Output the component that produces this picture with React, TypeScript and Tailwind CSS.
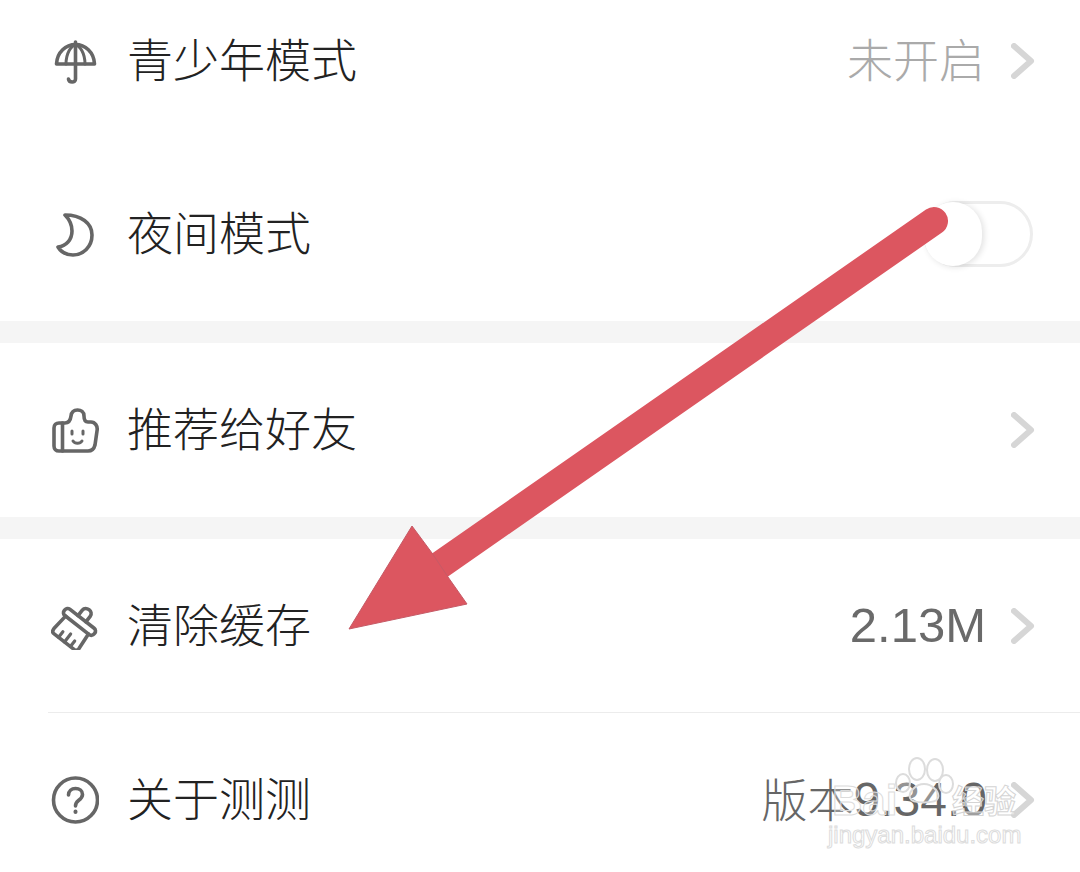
import type { ReactNode } from "react";

const cjk = "font-['Noto_Sans_CJK_SC','Noto_Sans',sans-serif]";
const latin = "font-['Liberation_Sans',sans-serif]";

function Chevron() {
  return (
    <svg width="24" height="36" viewBox="0 0 24 36" className="ml-[26px] shrink-0">
      <path d="M3 3 L20 18 L3 33" fill="none" stroke="#d6d6d6" strokeWidth="6" strokeLinecap="round" strokeLinejoin="round" />
    </svg>
  );
}

function Icon({ children }: { children: ReactNode }) {
  return (
    <svg
      width="48"
      height="48"
      viewBox="0 0 48 48"
      fill="none"
      stroke="#666"
      strokeWidth="3.6"
      strokeLinecap="round"
      strokeLinejoin="round"
      className="shrink-0"
    >
      {children}
    </svg>
  );
}

const UmbrellaIcon = () => (
  <Icon>
    <path d="M5.5 27 C6 15 15 7.5 24.5 7.5 C34 7.5 43 15 43.5 27 Z" />
    <path d="M15 27 C15 16 20 9 24.5 7.5 C29 9 34 16 34 27" strokeWidth="3" />
    <path d="M24.5 5 V42 C24.5 46 18 46 17.5 42" />
  </Icon>
);

const MoonIcon = () => (
  <Icon>
    <path d="M14 5 C30 5 41 13 41 25 C41 37 32 45 22 45 C15 45 10 42 7 37 C15 36 21 30 21 21 C21 14 18 9 14 5 Z" />
  </Icon>
);

const ThumbIcon = () => (
  <Icon>
    <path d="M8 17 L14 17 C18 17 19.5 14 20 10 C20.5 6 23 4 26.5 4 C30 4 33 6 33 10 C33 13 34 16 37 16 L40 16 C44 16 47 20 46 25 L44 39 C43 43 41 45 37 45 L8 45 C5 45 3 43 3 40 L3 22 C3 19 5 17 8 17 Z" />
    <path d="M11.5 17 V45" />
    <path d="M21 25 V28 M32 25 V28" strokeWidth="3" />
    <path d="M22 35 C24 38 29 38 31 35" strokeWidth="3" />
  </Icon>
);

const BroomIcon = () => (
  <Icon>
    <g transform="rotate(38 24 24) translate(1 1)">
      <path d="M19 13 V6 C19 0 29 0 29 6 V13" />
      <rect x="5" y="13" width="38" height="8" rx="3.5" />
      <path d="M9.5 21 L8 38 C8 41 9 42 11 42 H37 C39 42 40 41 40 38 L38.5 21" />
      <path d="M17 35 V42 M24.5 32 V42 M32 35 V42" strokeWidth="3.2" />
    </g>
  </Icon>
);

const HelpIcon = () => (
  <Icon>
    <circle cx="24.5" cy="24" r="22" />
    <path d="M17.5 19 C17.5 15 20.5 12.5 24.5 12.5 C28.5 12.5 31.5 15 31.5 18.5 C31.5 21.5 29.5 23 27.5 24.5 C25.5 26 24.5 27.5 24.5 30" />
    <path d="M24.5 35.5 V36" strokeWidth="4" />
  </Icon>
);

function Row({
  icon,
  label,
  right,
  chevron = true,
  height = "h-[174px]",
}: {
  icon: ReactNode;
  label: string;
  right?: ReactNode;
  chevron?: boolean;
  height?: string;
}) {
  return (
    <div className={`flex ${height} items-center pl-[51px] pr-[45px]`}>
      {icon}
      <span className="ml-[28px] pb-[8px] text-[46px] font-light leading-none text-[#222]">{label}</span>
      <div className="ml-auto flex items-center">
        {right}
        {chevron && <Chevron />}
      </div>
    </div>
  );
}

function Toggle() {
  return (
    <div className="relative mr-[2px] h-[66px] w-[110px] rounded-full border-[3px] border-[#ededed] bg-white">
      <div className="absolute left-[-2px] top-[-2px] h-[64px] w-[58px] rounded-full bg-white shadow-[2px_1px_6px_rgba(0,0,0,0.12)]" />
    </div>
  );
}

function Arrow() {
  return (
    <svg width="1080" height="872" viewBox="0 0 1080 872" className="pointer-events-none absolute left-0 top-0">
      <path d="M934 221 L440 565" stroke="#dc5660" strokeWidth="28" strokeLinecap="round" />
      <path d="M349 629 L412 526 L432 553 L448 577 L467 604 Z" fill="#dc5660" stroke="#c65a66" strokeWidth="1" />
    </svg>
  );
}

function Watermark() {
  return (
    <div className="pointer-events-none absolute left-[826px] top-[754px] h-[100px] w-[200px]">
      <svg width="80" height="50" viewBox="0 0 80 50" className="absolute left-[66px] top-0" fill="rgba(255,255,255,0.3)" stroke="#dcdcdc" strokeWidth="2">
        <ellipse cx="25" cy="15" rx="8" ry="11" />
        <ellipse cx="43" cy="16" rx="8" ry="11" />
        <ellipse cx="11" cy="29" rx="7" ry="9" />
        <ellipse cx="54" cy="30" rx="7" ry="9" />
        <path d="M32 30 C40 30 48 38 46 44 C44 50 20 50 18 44 C16 38 24 30 32 30 Z" />
      </svg>
      <span className={`absolute left-[6px] top-[26px] ${latin} text-[42px] font-bold leading-none text-white/30 [-webkit-text-stroke:1px_#dcdcdc]`}>
        Bai
      </span>
      <span className={`absolute left-[126px] top-[29px] ${cjk} text-[32px] font-bold leading-none text-white/40 [-webkit-text-stroke:1px_#d4d4d4]`}>
        经验
      </span>
      <span className={`absolute left-[2px] top-[69px] ${latin} text-[24px] leading-none text-white [-webkit-text-stroke:1px_#dcdcdc]`}>
        jingyan.baidu.com
      </span>
    </div>
  );
}

export default function App() {
  return (
    <div className={`relative h-[872px] w-[1080px] overflow-hidden bg-white ${cjk}`}>
      <div className="mt-[-25px]">
        <Row
          icon={<UmbrellaIcon />}
          label="青少年模式"
          height="h-[172px]"
          right={<span className="pb-[8px] text-[46px] font-light leading-none text-[#aaa]">未开启</span>}
        />
        <Row icon={<MoonIcon />} label="夜间模式" right={<Toggle />} chevron={false} />
        <div className="h-[22px] bg-[#f5f5f5]" />
        <Row icon={<ThumbIcon />} label="推荐给好友" />
        <div className="h-[22px] bg-[#f5f5f5]" />
        <Row
          icon={<BroomIcon />}
          label="清除缓存"
          height="h-[173px]"
          right={<span className={`-mr-[1px] ${latin} text-[49px] leading-none text-[#6a6a6a]`}>2.13M</span>}
        />
        <div className="ml-[48px] h-px bg-[#ececec]" />
        <Row
          icon={<HelpIcon />}
          label="关于测测"
          right={
            <span className="-mr-[2px] flex items-center leading-none text-[#666]">
              <span className="pb-[6px] text-[46px] font-light">版本</span>
              <span className={`${latin} text-[48px]`}>9.34.0</span>
            </span>
          }
        />
      </div>
      <Watermark />
      <Arrow />
    </div>
  );
}
